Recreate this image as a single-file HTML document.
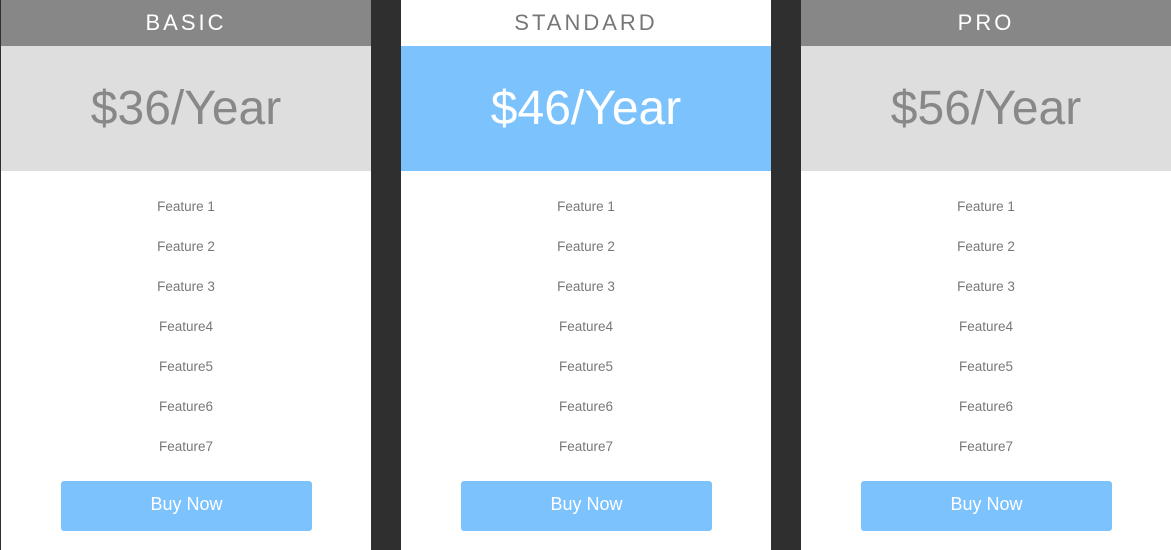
<!DOCTYPE html>
<html><head><meta charset="utf-8"><style>
html,body{margin:0;padding:0;width:1171px;height:550px;overflow:hidden;background:#2f2f2f;font-family:"Liberation Sans",sans-serif}
.col{position:absolute;top:0;width:370px;height:550px;background:#fff}
.hd{height:46px;line-height:46px;text-align:center;font-size:22px;letter-spacing:3px;color:#fff;background:#878787}
.pr{height:125px;line-height:125px;text-align:center;font-size:48px;color:#888;background:#dedede}
.f{height:40px;line-height:40px;text-align:center;font-size:13.5px;color:#777}
.feat{padding-top:16px}
.btn{position:absolute;left:60px;top:481px;width:251px;height:50px;line-height:47px;background:#7cc3fd;border-radius:3px;color:#fff;text-align:center;font-size:18px}
.std .hd{background:#fff;color:#777}
.std .pr{background:#7cc3fd;color:#fff}
</style></head><body>
<div class="col" style="left:1px"><div class="hd">BASIC</div><div class="pr">$36/Year</div>
<div class="feat"><div class="f">Feature 1</div><div class="f">Feature 2</div><div class="f">Feature 3</div><div class="f">Feature4</div><div class="f">Feature5</div><div class="f">Feature6</div><div class="f">Feature7</div></div><div class="btn">Buy Now</div></div>
<div class="col std" style="left:401px"><div class="hd">STANDARD</div><div class="pr">$46/Year</div>
<div class="feat"><div class="f">Feature 1</div><div class="f">Feature 2</div><div class="f">Feature 3</div><div class="f">Feature4</div><div class="f">Feature5</div><div class="f">Feature6</div><div class="f">Feature7</div></div><div class="btn">Buy Now</div></div>
<div class="col" style="left:801px"><div class="hd">PRO</div><div class="pr">$56/Year</div>
<div class="feat"><div class="f">Feature 1</div><div class="f">Feature 2</div><div class="f">Feature 3</div><div class="f">Feature4</div><div class="f">Feature5</div><div class="f">Feature6</div><div class="f">Feature7</div></div><div class="btn">Buy Now</div></div>
</body></html>
